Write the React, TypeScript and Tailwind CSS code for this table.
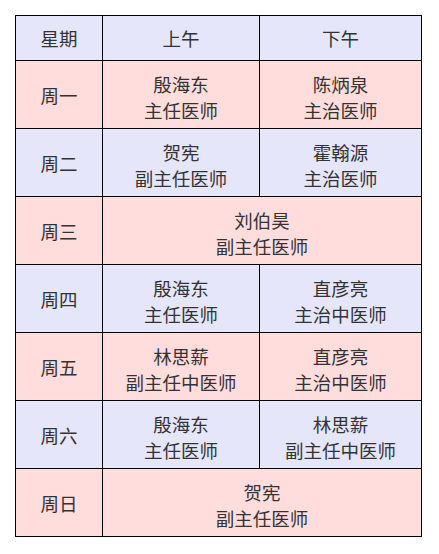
const rows: { day: string; am: string[]; pm?: string[]; bg: string }[] = [
  { day: "周一", am: ["殷海东", "主任医师"], pm: ["陈炳泉", "主治医师"], bg: "bg-[#ffdddd]" },
  { day: "周二", am: ["贺宪", "副主任医师"], pm: ["霍翰源", "主治医师"], bg: "bg-[#e6e6fa]" },
  { day: "周三", am: ["刘伯昊", "副主任医师"], bg: "bg-[#ffdddd]" },
  { day: "周四", am: ["殷海东", "主任医师"], pm: ["直彦亮", "主治中医师"], bg: "bg-[#e6e6fa]" },
  { day: "周五", am: ["林思薪", "副主任中医师"], pm: ["直彦亮", "主治中医师"], bg: "bg-[#ffdddd]" },
  { day: "周六", am: ["殷海东", "主任医师"], pm: ["林思薪", "副主任中医师"], bg: "bg-[#e6e6fa]" },
  { day: "周日", am: ["贺宪", "副主任医师"], bg: "bg-[#ffdddd]" },
]

function Doctor({ lines }: { lines: string[] }) {
  return (
    <>
      {lines.map((l, i) => (
        <div key={i}>{l}</div>
      ))}
    </>
  )
}

export default function App() {
  return (
    <div
      className="bg-white w-[439px] h-[554px] pt-[15px] pl-[15px] text-[#333] text-[18.5px] leading-[26px]"
      style={{ fontFamily: '"Noto Sans CJK SC", "Noto Sans", sans-serif' }}
    >
      <table className="border-collapse border border-black text-center">
        <thead>
          <tr className="h-[45px] bg-[#e6e6fa]">
            <th className="w-[87px] border border-black font-normal">星期</th>
            <th className="w-[157px] border border-black font-normal">上午</th>
            <th className="w-[162px] border border-black font-normal">下午</th>
          </tr>
        </thead>
        <tbody>
          {rows.map((r) => (
            <tr key={r.day} className={`h-[68px] ${r.bg}`}>
              <td className="border border-black">{r.day}</td>
              {r.pm ? (
                <>
                  <td className="border border-black pt-[4px]">
                    <Doctor lines={r.am} />
                  </td>
                  <td className="border border-black pt-[4px]">
                    <Doctor lines={r.pm} />
                  </td>
                </>
              ) : (
                <td colSpan={2} className="border border-black pt-[4px]">
                  <Doctor lines={r.am} />
                </td>
              )}
            </tr>
          ))}
        </tbody>
      </table>
    </div>
  )
}
